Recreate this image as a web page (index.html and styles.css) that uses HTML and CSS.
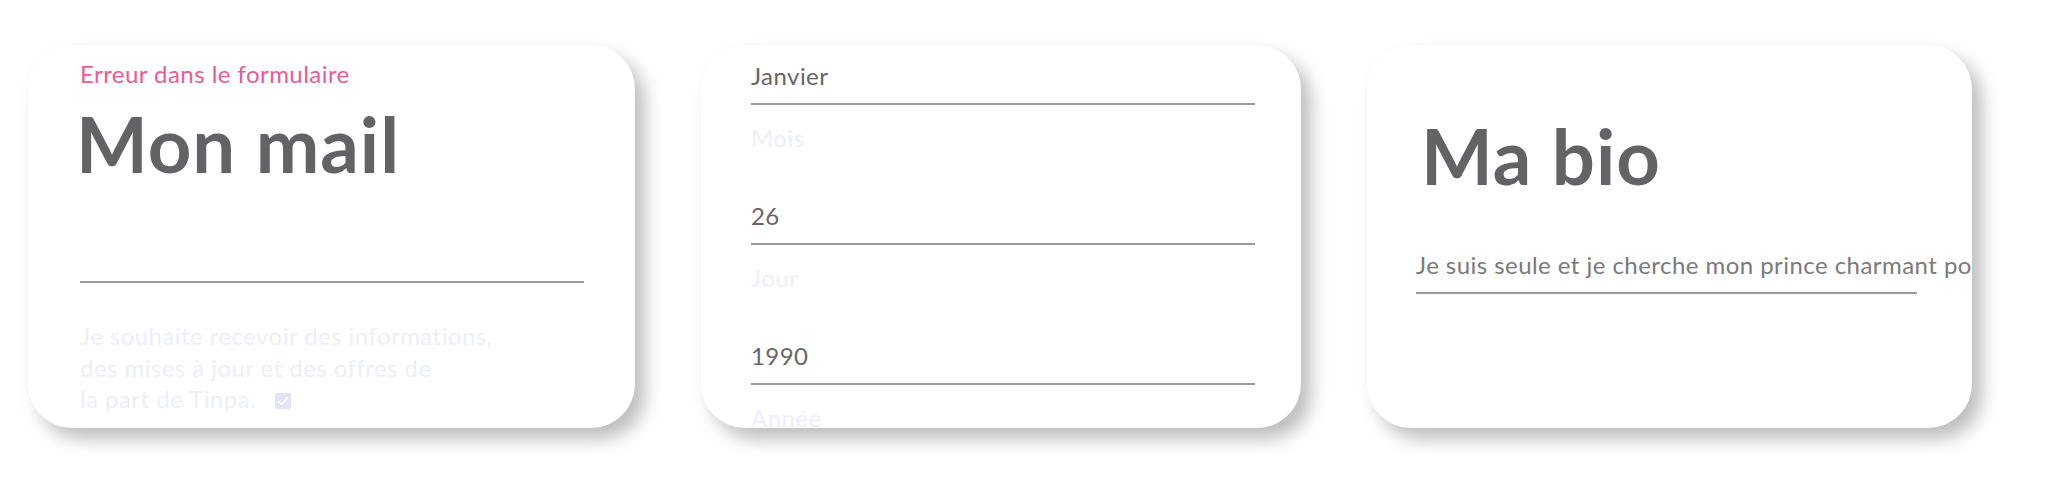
FILE: index.html
```html
<!DOCTYPE html>
<html lang="fr">
<head>
<meta charset="utf-8">
<title>Tinpa – formulaire</title>
<link rel="stylesheet" href="styles.css">
</head>
<body>
<main class="row">
  <section class="card card-mail">
    <p class="error">Erreur dans le formulaire</p>
    <h1 class="title">Mon mail</h1>
    <div class="input input-mail"></div>
    <p class="optin">Je souhaite recevoir des informations,<br>des mises à jour et des offres de<br>la part de Tinpa.<span class="check"><svg viewBox="0 0 16 16" width="16" height="16"><rect x="0" y="0" width="16" height="16" rx="1.5" fill="#e3e3f3"/><path d="M3.5 8.3 L6.6 11.4 L12.6 4.4" fill="none" stroke="#ffffff" stroke-width="1.6" stroke-linecap="round" stroke-linejoin="round"/></svg></span></p>
  </section>

  <section class="card card-date">
    <div class="field">
      <div class="value">Janvier</div>
      <div class="label">Mois</div>
    </div>
    <div class="field">
      <div class="value">26</div>
      <div class="label">Jour</div>
    </div>
    <div class="field">
      <div class="value">1990</div>
      <div class="label">Année</div>
    </div>
  </section>

  <section class="card card-bio">
    <h1 class="title title-bio">Ma bio</h1>
    <div class="bio">Je suis seule et je cherche mon prince charmant pour partager de beaux moments</div>
  </section>
</main>
</body>
</html>
```

FILE: styles.css
```css
* { box-sizing: border-box; }

html, body {
  margin: 0;
  padding: 0;
  background: #ffffff;
}

body {
  font-family: "Lato", "Noto Sans", sans-serif;
  width: 2048px;
  height: 477px;
  overflow: hidden;
}

.row {
  display: flex;
  align-items: flex-start;
  padding: 45px 0 0 28px;
  gap: 66px;
}

.card {
  height: 383px;
  background: #ffffff;
  border-radius: 44px;
  box-shadow: 10px 11px 18px rgba(0, 0, 0, 0.26);
  overflow: hidden;
  flex: none;
}

.card-mail { width: 607px; padding: 14px 0 0 52px; }
.card-date { width: 600px; padding: 16px 0 0 50px; }
.card-bio  { width: 605px; padding: 71px 0 0 49px; }

.error,
.optin,
.value,
.label,
.bio {
  font-size: 24px;
  letter-spacing: 0.45px;
}

.error {
  margin: 0;
  line-height: 30px;
  color: #ec5b92;
  font-weight: 400;
}

.title {
  margin: 15px 0 0 -4px;
  font-size: 76px;
  line-height: 80px;
  font-weight: 700;
  color: #636366;
  letter-spacing: 1px;
}

.title-bio { margin: 0 0 0 5px; }

.input {
  border-bottom: 2px solid #9b9b9d;
}

.input-mail {
  width: 504px;
  height: 99px;
}

.optin {
  margin: 37px 0 0 0;
  line-height: 31.5px;
  color: #eeeef8;
}

.check {
  display: inline-block;
  margin-left: 19px;
  vertical-align: -1px;
  line-height: 0;
}

.field {
  width: 504px;
}

.field + .field { margin-top: 48px; }

.value {
  line-height: 30px;
  color: #666668;
  padding-bottom: 12px;
  border-bottom: 2px solid #9b9b9d;
}

.label {
  margin-top: 18px;
  line-height: 30px;
  color: #eeeef8;
}

.bio {
  margin-top: 54px;
  width: 501px;
  line-height: 30px;
  color: #7a7a7c;
  white-space: nowrap;
  padding-bottom: 12px;
  border-bottom: 2px solid #9b9b9d;
}
```
